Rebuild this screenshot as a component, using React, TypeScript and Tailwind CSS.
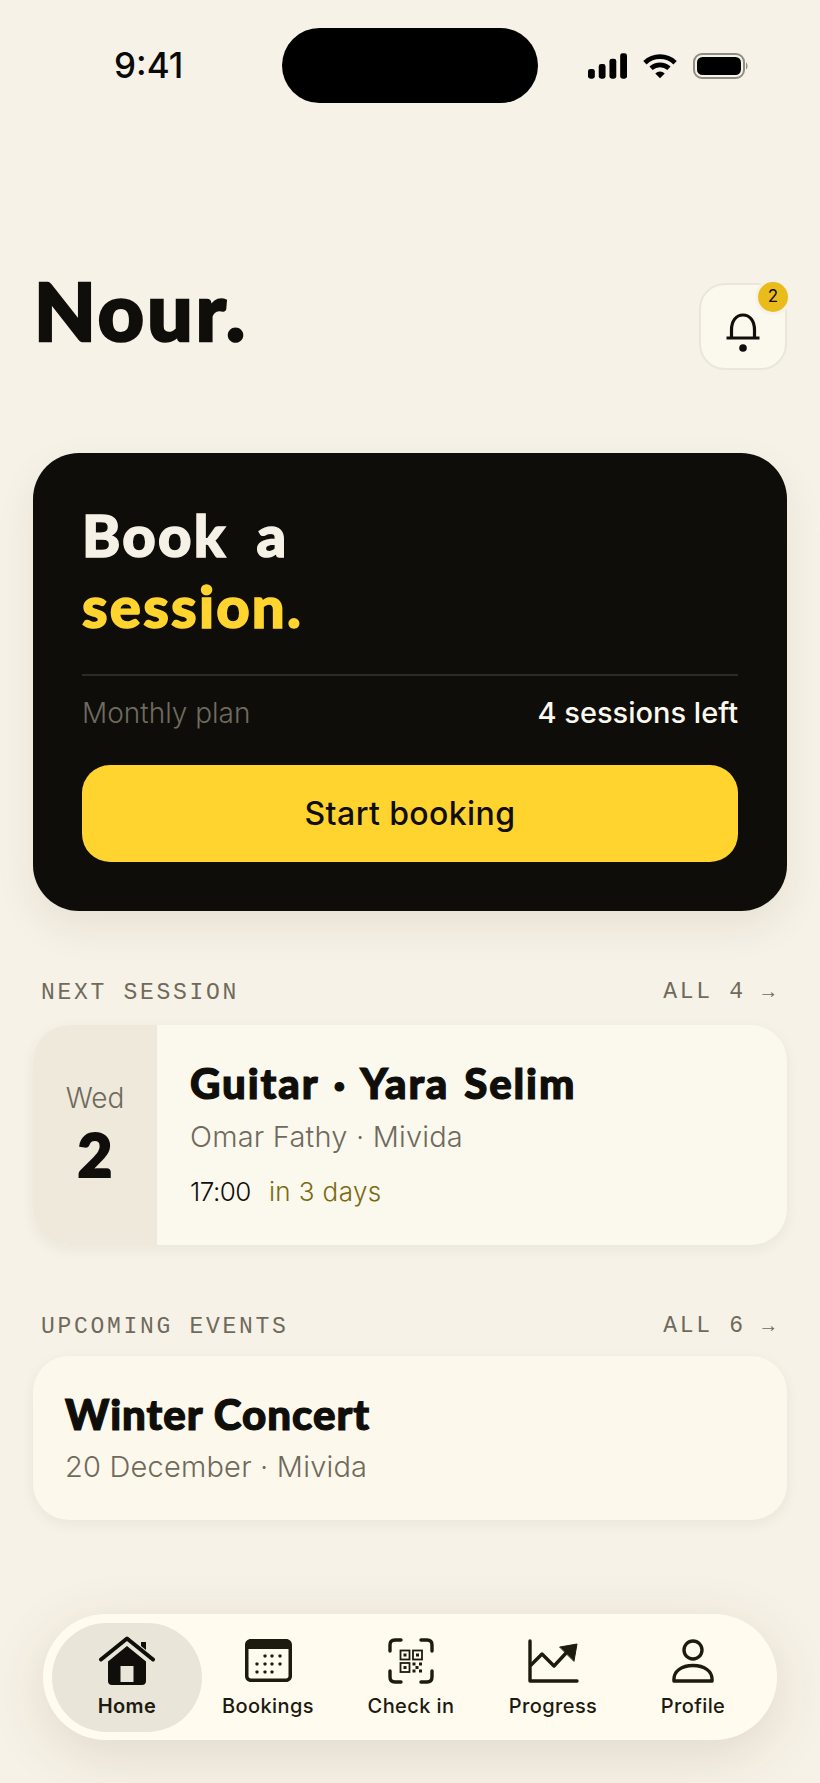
import React from 'react';

const display = "font-[family-name:Lato,sans-serif] font-black";
const body = "font-[family-name:Inter,sans-serif]";
const mono = "font-[family-name:'Liberation_Mono',monospace]";
const ui = "font-[family-name:Inter,sans-serif]";

function StatusIcons() {
  return (
    <div className="flex items-center gap-[16px]">
      <svg width="39" height="26" viewBox="0 0 40 26" fill="#000">
        <rect x="0" y="16" width="7" height="10" rx="2.5" />
        <rect x="11" y="11" width="7" height="15" rx="2.5" />
        <rect x="22" y="5.500" width="7" height="20.500" rx="2.500" />
        <rect x="33" y="0" width="7" height="26" rx="2.500" />
      </svg>
      <svg width="34" height="26" viewBox="0 0 36 26" fill="none" stroke="#000" strokeWidth="5">
        <path d="M2 9.500 C11 1 25 1 34 9.500" />
        <path d="M8.500 15.500 C14 10.500 22 10.500 27.500 15.500" />
        <path d="M13 21 L18 26 L23 21 C20 18 16 18 13 21 Z" fill="#000" stroke="none" />
      </svg>
      <svg width="55" height="26" viewBox="0 0 55 26">
        <rect x="1" y="1" width="50" height="24" rx="8" fill="none" stroke="#8f8c84" strokeWidth="2" />
        <rect x="4" y="4" width="44" height="18" rx="5.500" fill="#000" />
        <path d="M53 9.500 C55 10.500 55 15.500 53 16.500 Z" fill="#8f8c84" />
      </svg>
    </div>
  );
}

function BellIcon() {
  return (
    <svg width="34" height="40" viewBox="0 0 34 40" fill="none" stroke="#0f0e0b" strokeWidth="3.200">
      <path d="M5.500 24 V17 C5.500 8 10 2 17 2 C24 2 28.500 8 28.500 17 V24" />
      <path d="M0.500 25 H33.500" />
      <circle cx="17" cy="35" r="3.800" fill="#0f0e0b" stroke="none" />
    </svg>
  );
}

function HomeIcon() {
  return (
    <svg width="56" height="50" viewBox="0 0 56 50" fill="#0f0e0b">
      <path d="M47 6 H42 V10 L47 14 Z" />
      <path d="M2 23.500 L28 2.500 L54 23.500" fill="none" stroke="#0f0e0b" strokeWidth="4" strokeLinecap="round" strokeLinejoin="round" />
      <path fillRule="evenodd" d="M28 10 L47 25.500 V45 C47 47.500 45.500 49 43 49 H13 C10.500 49 9 47.500 9 45 V25.500 Z M21.500 30 V46 H34.500 V30 Z" />
    </svg>
  );
}

function CalendarIcon() {
  const dots = [[20, 17], [27, 17], [35, 17], [12, 25], [20, 25], [27, 25], [35, 25], [12, 33], [20, 33], [27, 33]];
  return (
    <svg width="47" height="43" viewBox="0 0 47 43" fill="#1d1a10">
      <path fillRule="evenodd" d="M6 0 H41 C44.500 0 47 2.500 47 6 V37 C47 40.500 44.500 43 41 43 H6 C2.500 43 0 40.500 0 37 V6 C0 2.500 2.500 0 6 0 Z M3.500 10 V37 C3.500 38.500 4.500 39.500 6 39.500 H41 C42.500 39.500 43.500 38.500 43.500 37 V10 Z" />
      {dots.map(([x, y]) => (
        <rect key={`${x}-${y}`} x={x - 1.500} y={y - 1.500} width="3" height="3" rx="0.800" />
      ))}
    </svg>
  );
}

function QrIcon() {
  return (
    <svg width="46" height="46" viewBox="0 0 46 46" fill="none" stroke="#1d1a10">
      <g strokeWidth="3.400" strokeLinecap="round">
        <path d="M13 2 H7 C3.800 2 2 3.800 2 7 V13" />
        <path d="M33 2 H39 C42.200 2 44 3.800 44 7 V13" />
        <path d="M13 44 H7 C3.800 44 2 42.200 2 39 V33" />
        <path d="M33 44 H39 C42.200 44 44 42.200 44 39 V33" />
      </g>
      <g strokeWidth="1.800">
        <rect x="12.500" y="12.500" width="9" height="9" />
        <rect x="25" y="12.500" width="9" height="9" />
        <rect x="12.500" y="25" width="9" height="9" />
      </g>
      <g fill="#1d1a10" stroke="none">
        <rect x="15.500" y="15.500" width="3" height="3" />
        <rect x="28" y="15.500" width="3" height="3" />
        <rect x="15.500" y="28" width="3" height="3" />
        <rect x="24.500" y="24.500" width="3" height="3" />
        <rect x="31" y="24.500" width="3" height="3" />
        <rect x="27.500" y="28" width="3" height="3" />
        <rect x="24.500" y="31.500" width="3" height="3" />
        <rect x="31" y="31.500" width="3" height="3" />
      </g>
    </svg>
  );
}

function ChartIcon() {
  return (
    <svg width="51" height="44" viewBox="0 0 51 44" fill="none" stroke="#1d1a10" strokeWidth="3.400" strokeLinecap="round" strokeLinejoin="round">
      <path d="M2 2 V42 H49" />
      <path d="M3 26 L14 15 L26 27 L39 13" />
      <path d="M32 8 L49 5 L46 22 Z" fill="#1d1a10" strokeWidth="1" />
    </svg>
  );
}

function PersonIcon() {
  return (
    <svg width="42" height="44" viewBox="0 0 42 44" fill="none" stroke="#1d1a10" strokeWidth="3.400" strokeLinejoin="round">
      <circle cx="21" cy="11" r="9" />
      <path d="M2 42 C1 32 10 26.500 21 26.500 C32 26.500 41 32 40 42 Z" />
    </svg>
  );
}

const navItems = [
  { label: 'Home', icon: <HomeIcon />, width: 'w-[150px]', active: true },
  { label: 'Bookings', icon: <CalendarIcon />, width: 'w-[132px]' },
  { label: 'Check in', icon: <QrIcon />, width: 'w-[154px]' },
  { label: 'Progress', icon: <ChartIcon />, width: 'w-[130px]' },
  { label: 'Profile', icon: <PersonIcon />, width: 'w-[150px]' },
];

function SectionHeader({ title, count }: { title: string; count: string }) {
  return (
    <div className={`flex items-center justify-between pl-[8px] pr-[10px] text-[23px] leading-[24px] tracking-[2.700px] text-[#6f6a5b] ${mono}`}>
      <span>{title}</span>
      <span>ALL {count} <span className="text-[20px]">→</span></span>
    </div>
  );
}

export default function App() {
  return (
    <div className="flex h-[1783px] w-[820px] flex-col overflow-hidden bg-[#f7f2e7]">
      {/* Status bar */}
      <div className="mt-[28px] flex h-[75px] items-center pl-[114px] pr-[72px]">
        <span className={`w-[168px] text-[35px] font-medium leading-none text-[#0a0a0a] ${ui}`}>9:41</span>
        <div className="h-[75px] w-[256px] rounded-[38px] bg-black" />
        <div className="ml-auto">
          <StatusIcons />
        </div>
      </div>

      {/* Header */}
      <div className="mt-[180px] flex items-start justify-between pl-[34px] pr-[33px]">
        <h1 className={`text-[80px] leading-[54px] tracking-[3.200px] text-[#0f0e0b] [-webkit-text-stroke:2.500px_#0f0e0b] ${display}`}>Nour.</h1>
        <div className="relative flex h-[87px] w-[88px] items-center justify-center rounded-[26px] border-2 border-[#ebe6d8] bg-[#fbf8ee] pt-[12px]">
          <BellIcon />
          <span className={`absolute right-[-3px] top-[-3px] flex h-[30px] w-[30px] items-center justify-center rounded-full bg-[#e9bc1c] text-[17px] text-[#0f0e0b] shadow-[0_0_0_3px_#f7f2e7] ${ui}`}>2</span>
        </div>
      </div>

      {/* Booking card */}
      <div className="mx-[33px] mt-[83px] flex h-[458px] flex-col rounded-[46px] bg-[#0e0d09] px-[49px] pt-[46px] shadow-[0_16px_40px_rgba(40,30,10,0.08)]">
        <h2 className={`text-[58px] leading-[71px] tracking-[2.200px] [word-spacing:13px] [-webkit-text-stroke:1.500px_currentColor] ${display}`}>
          <span className="block text-[#f6f1e7]">Book a</span>
          <span className="block text-[#ffd42e]">session.</span>
        </h2>
        <div className="mt-[33px] h-[2px] bg-[#2c2b27]" />
        <div className={`mt-[18px] flex items-center justify-between ${body}`}>
          <span className="text-[28px] font-light leading-[38px] text-[#6f6b5f]">Monthly plan</span>
          <span className="text-[29px] font-medium leading-[38px] text-[#fbf8ee]">4 sessions left</span>
        </div>
        <button className={`mt-[33px] h-[97px] rounded-[28px] bg-[#ffd42e] text-[32px] font-medium tracking-[0.400px] text-[#0f0e0b] ${body}`}>Start booking</button>
      </div>

      {/* Next session */}
      <div className="mx-[33px] mt-[69px]">
        <SectionHeader title="NEXT SESSION" count="4" />
        <div className="mt-[20px] flex h-[220px] overflow-hidden rounded-[36px] bg-[#fbf8ee] shadow-[0_4px_14px_rgba(40,30,10,0.06)]">
          <div className="flex w-[124px] flex-col items-center justify-center bg-[#efe9db] pb-[3px]">
            <span className={`text-[28px] font-light leading-[32px] text-[#6f6a5b] ${body}`}>Wed</span>
            <span className={`mt-[9px] text-[60px] leading-[62px] text-[#0f0e0b] [-webkit-text-stroke:2px_#0f0e0b] ${display}`}>2</span>
          </div>
          <div className="flex flex-col pl-[33px] pt-[32px]">
            <span className={`text-[42px] leading-[52px] tracking-[1.900px] text-[#0f0e0b] [word-spacing:3px] [-webkit-text-stroke:1.200px_#0f0e0b] ${display}`}>Guitar · Yara Selim</span>
            <span className={`mt-[8px] text-[29px] font-light leading-[40px] tracking-[0.200px] text-[#6f6a5b] ${body}`}>Omar Fathy · Mivida</span>
            <div className={`mt-[16px] flex gap-[18px] text-[26px] font-light leading-[38px] ${body}`}>
              <span className="tracking-[-0.500px] text-[#0f0e0b]">17:00</span>
              <span className="tracking-[0.400px] text-[#7a6a12]">in 3 days</span>
            </div>
          </div>
        </div>
      </div>

      {/* Upcoming events */}
      <div className="mx-[33px] mt-[69px]">
        <SectionHeader title="UPCOMING EVENTS" count="6" />
        <div className="mt-[17px] flex h-[164px] flex-col rounded-[36px] bg-[#fdf8ec] pl-[32px] pt-[32px] shadow-[0_4px_14px_rgba(40,30,10,0.06)]">
          <span className={`text-[42px] leading-[52px] tracking-[1px] text-[#0f0e0b] [-webkit-text-stroke:1.200px_#0f0e0b] ${display}`}>Winter Concert</span>
          <span className={`mt-[7px] text-[29px] font-light leading-[40px] tracking-[0.200px] text-[#6f6a5b] ${body}`}>20 December · Mivida</span>
        </div>
      </div>

      {/* Bottom nav */}
      <nav className="mx-[43px] mt-[94px] flex h-[126px] w-[734px] items-center rounded-[63px] bg-[#fffcef] pl-[9px] shadow-[0_14px_60px_rgba(60,40,10,0.12)]">
        {navItems.map((item) => (
          <div key={item.label} className={`flex h-[109px] flex-col items-center justify-center rounded-[55px] ${item.width} ${item.active ? 'bg-[#e9e6d9]' : ''}`}>
            <div className="flex h-[50px] items-center justify-center">{item.icon}</div>
            <span className={`mt-[7px] text-[20px] leading-[26px] tracking-[0.400px] text-[#1d1a10] ${item.active ? 'font-semibold' : 'font-medium'} ${ui}`}>{item.label}</span>
          </div>
        ))}
      </nav>
    </div>
  );
}
